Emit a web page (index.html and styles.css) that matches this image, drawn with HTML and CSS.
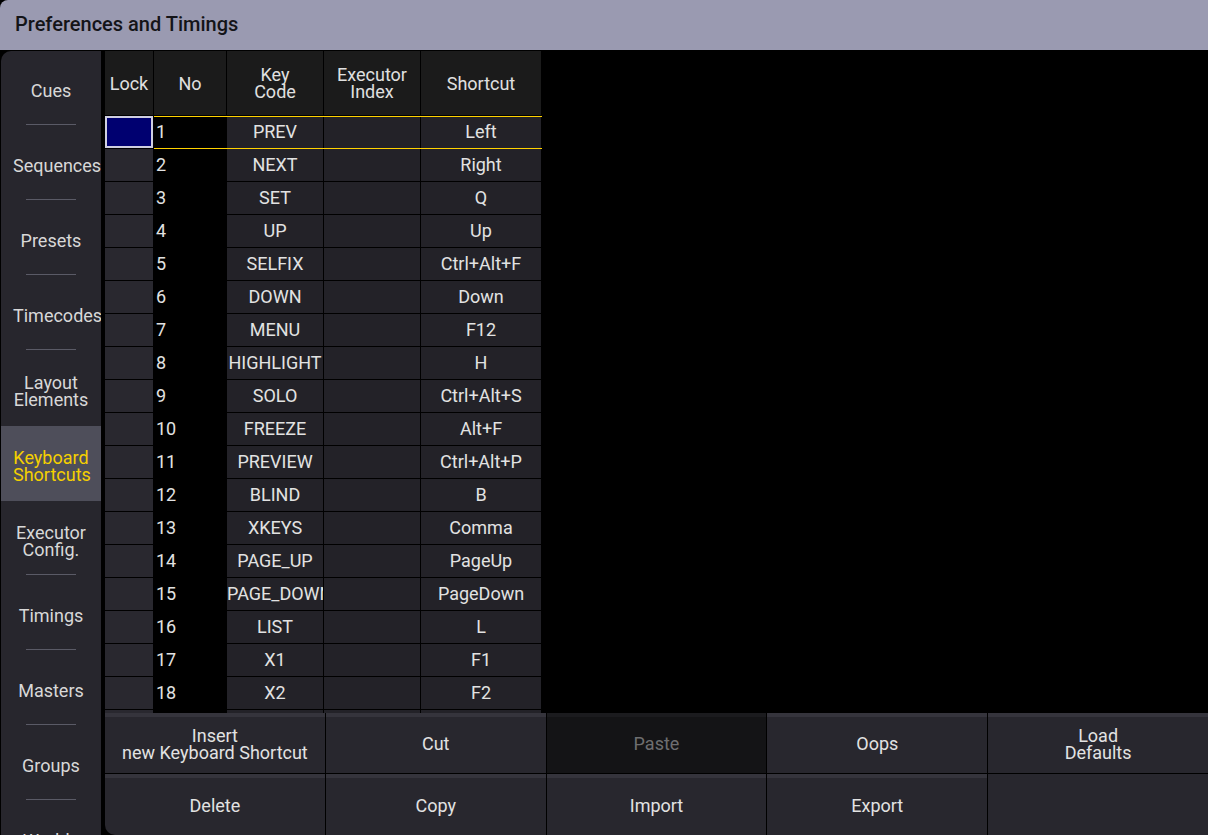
FILE: index.html
```html
<!DOCTYPE html>
<html lang="en">
<head>
    <meta charset="UTF-8">
    <title>Preferences and Timings</title>
    <link rel="stylesheet" href="styles.css">
</head>
<body>
    <div class="titlebar">
        <h1>Preferences and Timings</h1>
    </div>

    <div class="window">
        <nav class="sidebar">
            <div class="nav-item"><span>Cues</span></div>
            <div class="nav-item"><span>Sequences</span></div>
            <div class="nav-item"><span>Presets</span></div>
            <div class="nav-item"><span>Timecodes</span></div>
            <div class="nav-item"><span>Layout<br>Elements</span></div>
            <div class="nav-item active"><span>Keyboard<br>Shortcuts</span></div>
            <div class="nav-item"><span>Executor<br>Config.</span></div>
            <div class="nav-item"><span>Timings</span></div>
            <div class="nav-item"><span>Masters</span></div>
            <div class="nav-item"><span>Groups</span></div>
            <div class="nav-item"><span>Worlds</span></div>
        </nav>

        <div class="content">
            <div class="sheet-wrap">
                <div class="sheet">
                    <div class="row head">
                        <div class="cell">Lock</div>
                        <div class="cell">No</div>
                        <div class="cell">Key<br>Code</div>
                        <div class="cell">Executor<br>Index</div>
                        <div class="cell">Shortcut</div>
                    </div>
                    <div class="row selected">
                        <div class="cell lock"></div><div class="cell no">1</div><div class="cell">PREV</div><div class="cell"></div><div class="cell">Left</div>
                    </div>
                    <div class="row">
                        <div class="cell lock"></div><div class="cell no">2</div><div class="cell">NEXT</div><div class="cell"></div><div class="cell">Right</div>
                    </div>
                    <div class="row">
                        <div class="cell lock"></div><div class="cell no">3</div><div class="cell">SET</div><div class="cell"></div><div class="cell">Q</div>
                    </div>
                    <div class="row">
                        <div class="cell lock"></div><div class="cell no">4</div><div class="cell">UP</div><div class="cell"></div><div class="cell">Up</div>
                    </div>
                    <div class="row">
                        <div class="cell lock"></div><div class="cell no">5</div><div class="cell">SELFIX</div><div class="cell"></div><div class="cell">Ctrl+Alt+F</div>
                    </div>
                    <div class="row">
                        <div class="cell lock"></div><div class="cell no">6</div><div class="cell">DOWN</div><div class="cell"></div><div class="cell">Down</div>
                    </div>
                    <div class="row">
                        <div class="cell lock"></div><div class="cell no">7</div><div class="cell">MENU</div><div class="cell"></div><div class="cell">F12</div>
                    </div>
                    <div class="row">
                        <div class="cell lock"></div><div class="cell no">8</div><div class="cell">HIGHLIGHT</div><div class="cell"></div><div class="cell">H</div>
                    </div>
                    <div class="row">
                        <div class="cell lock"></div><div class="cell no">9</div><div class="cell">SOLO</div><div class="cell"></div><div class="cell">Ctrl+Alt+S</div>
                    </div>
                    <div class="row">
                        <div class="cell lock"></div><div class="cell no">10</div><div class="cell">FREEZE</div><div class="cell"></div><div class="cell">Alt+F</div>
                    </div>
                    <div class="row">
                        <div class="cell lock"></div><div class="cell no">11</div><div class="cell">PREVIEW</div><div class="cell"></div><div class="cell">Ctrl+Alt+P</div>
                    </div>
                    <div class="row">
                        <div class="cell lock"></div><div class="cell no">12</div><div class="cell">BLIND</div><div class="cell"></div><div class="cell">B</div>
                    </div>
                    <div class="row">
                        <div class="cell lock"></div><div class="cell no">13</div><div class="cell">XKEYS</div><div class="cell"></div><div class="cell">Comma</div>
                    </div>
                    <div class="row">
                        <div class="cell lock"></div><div class="cell no">14</div><div class="cell">PAGE_UP</div><div class="cell"></div><div class="cell">PageUp</div>
                    </div>
                    <div class="row">
                        <div class="cell lock"></div><div class="cell no">15</div><div class="cell">PAGE_DOWN</div><div class="cell"></div><div class="cell">PageDown</div>
                    </div>
                    <div class="row">
                        <div class="cell lock"></div><div class="cell no">16</div><div class="cell">LIST</div><div class="cell"></div><div class="cell">L</div>
                    </div>
                    <div class="row">
                        <div class="cell lock"></div><div class="cell no">17</div><div class="cell">X1</div><div class="cell"></div><div class="cell">F1</div>
                    </div>
                    <div class="row">
                        <div class="cell lock"></div><div class="cell no">18</div><div class="cell">X2</div><div class="cell"></div><div class="cell">F2</div>
                    </div>
                    <div class="row">
                        <div class="cell lock"></div><div class="cell no">19</div><div class="cell">X3</div><div class="cell"></div><div class="cell">F3</div>
                    </div>
                </div>
            </div>

            <div class="buttons">
                <div class="btn">Insert<br>new Keyboard Shortcut</div>
                <div class="btn">Cut</div>
                <div class="btn disabled">Paste</div>
                <div class="btn">Oops</div>
                <div class="btn">Load<br>Defaults</div>
                <div class="btn">Delete</div>
                <div class="btn">Copy</div>
                <div class="btn">Import</div>
                <div class="btn">Export</div>
                <div class="btn empty"></div>
            </div>
        </div>
    </div>
</body>
</html>
```

FILE: styles.css
```css
body {
    margin: 0;
    background: #000;
    font-family: Roboto, "Noto Sans", sans-serif;
    color: #e2e2e2;
    width: 1208px;
    height: 835px;
    overflow: hidden;
}

/* window title */
.titlebar {
    height: 50px;
    background: #9a9ab1;
    border-top-left-radius: 8px;
}
.titlebar h1 {
    margin: 0;
    padding-left: 15px;
    font-size: 20px;
    font-weight: 500;
    line-height: 48px;
    color: #141418;
}

.window {
    display: flex;
    gap: 4px;
    height: 784px;
    padding: 1px 0 0 1px;
}

/* left menu */
.sidebar {
    width: 100px;
    flex-shrink: 0;
    background: #27262d;
    border-top-left-radius: 10px;
    overflow: hidden;
}
.nav-item {
    position: relative;
    box-sizing: border-box;
    height: 75px;
    padding: 4px 12px 0;
    display: flex;
    flex-direction: column;
    justify-content: center;
    font-size: 18px;
    line-height: 17px;
    color: #d8d8d8;
}
.nav-item span {
    text-align: center;
    white-space: nowrap;
}
.nav-item::after {
    content: "";
    position: absolute;
    left: 25px;
    bottom: 1px;
    width: 50px;
    height: 1px;
    background: #5a5a66;
}
.nav-item.active {
    background: #4e4e5a;
    color: #f5d000;
}
.nav-item.active::after,
.nav-item:has(+ .active)::after {
    display: none;
}

.content {
    flex: 1;
    display: flex;
    flex-direction: column;
    border-bottom-left-radius: 10px;
    overflow: hidden;
}

/* shortcut table */
.sheet-wrap {
    height: 662px;
    overflow: hidden;
}
.sheet {
    width: 436px;
    display: flex;
    flex-direction: column;
    gap: 1px;
}
.row {
    position: relative;
    display: grid;
    grid-template-columns: 48px 72px 96px 96px 120px;
    column-gap: 1px;
    height: 32px;
    flex-shrink: 0;
}
.cell {
    background: #232228;
    font-size: 18px;
    line-height: 31px;
    text-align: center;
    white-space: nowrap;
    overflow: hidden;
}
.cell.lock {
    background: #29282f;
}
.cell.no {
    background: #000;
    text-align: left;
    padding-left: 2px;
}

.row.head {
    height: 64px;
}
.row.head .cell {
    background: #1b1b1b;
    line-height: 17px;
    display: flex;
    align-items: center;
    justify-content: center;
    color: #e0e0e0;
}

.row.selected::after {
    content: "";
    position: absolute;
    left: 49px;
    right: -1px;
    top: 0;
    bottom: -1px;
    border-top: 1px solid #ffd200;
    border-bottom: 1px solid #ffd200;
}
.row.selected .cell.lock {
    background: #000070;
    box-shadow: inset 0 0 0 2px #cfcfe0;
}

/* command buttons */
.buttons {
    flex: 1;
    display: grid;
    grid-template-columns: repeat(5, 1fr);
    grid-template-rows: 60px 61px;
    gap: 1px;
}
.btn {
    background: #28272e;
    border-top: 4px solid #35343c;
    padding-bottom: 3px;
    display: flex;
    align-items: center;
    justify-content: center;
    text-align: center;
    font-size: 18px;
    line-height: 17px;
    color: #e2e2e2;
}
.btn.disabled {
    background: #141416;
    border-top-color: #1b1b1e;
    color: #6e6e70;
}
.btn.empty {
    border-top-color: #28272e;
}
```
